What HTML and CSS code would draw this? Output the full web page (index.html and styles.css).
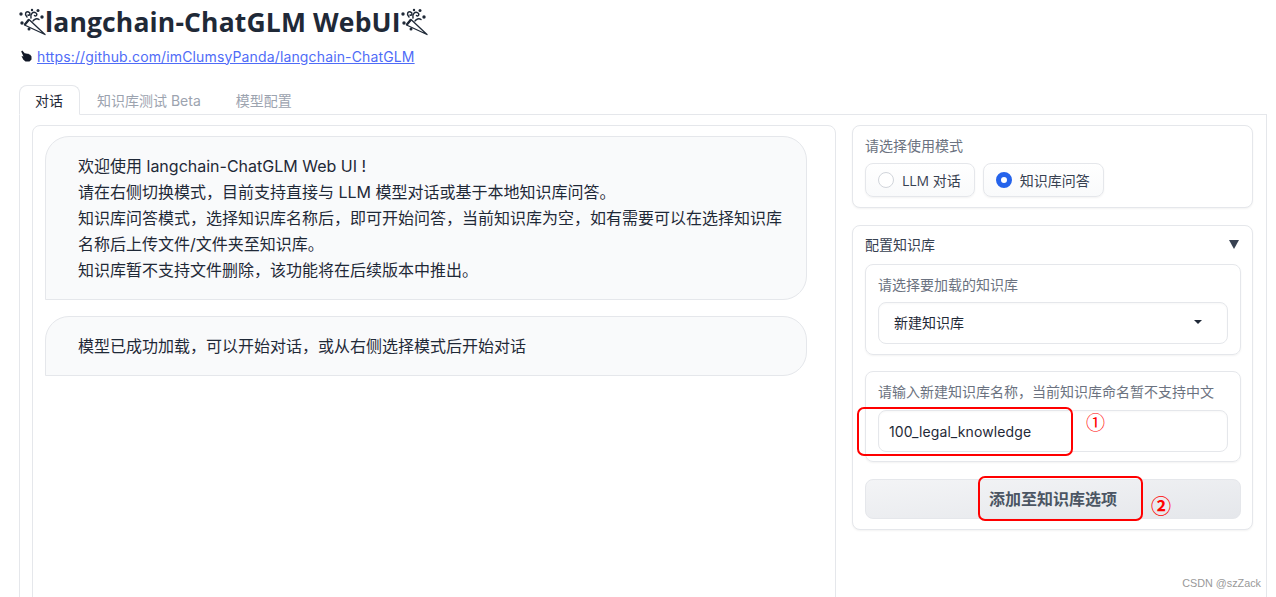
FILE: index.html
```html
<!DOCTYPE html>
<html lang="zh">
<head>
<meta charset="utf-8">
<title>langchain-ChatGLM WebUI</title>
<link rel="stylesheet" href="styles.css">
</head>
<body>
<svg width="0" height="0" class="defs"><defs><g id="popper"><path d="M11 11.5 L27 26.5 L6.5 17 Z" fill="#fff" stroke="#1f2937" stroke-width="1.3" stroke-linejoin="round"/><path d="M11 11.5 L6.5 17" stroke="#1f2937" stroke-width="2.2"/><g fill="none" stroke="#1f2937" stroke-width="1.5" stroke-linecap="round"><path d="M9 9C6 6 8 3 10.500 4S12 8 10 7"/><path d="M13 10c-1-4 2-7 5-5 2 1.500 0 4-1.500 2.500"/><path d="M15 13c1-2 4-3 6-1.500"/></g><g fill="#1f2937"><circle cx="3" cy="6" r="1.700"/><circle cx="4" cy="15" r="1.700"/><circle cx="20" cy="2.500" r="1.500"/><circle cx="24" cy="9" r="1.700"/><circle cx="11" cy="21" r="1.500"/><circle cx="14" cy="2" r="1.200"/></g></g></defs></svg>
<h1 class="title"><svg class="party" viewBox="0 0 28 28"><use href="#popper"/></svg>langchain-ChatGLM WebUI<svg class="party" viewBox="0 0 28 28"><use href="#popper"/></svg></h1>
<p class="repo"><svg class="hand" viewBox="0 0 12 12"><path d="M2.200 .5 L5.200 3.800 L5.800 3 L7 4 L8 3.500 L9.200 4.600 L10 4.400 L11.500 6.500 L11.500 9.500 L9.500 11.500 L5.500 11.500 L3.200 9.500 L1.500 6 L3.500 6.500 L1.200 1.500 Z" fill="#111827"/></svg><a href="#">https://github.com/imClumsyPanda/langchain-ChatGLM</a></p>
<div class="tabs">
  <span class="tab active">对话</span>
  <span class="tab">知识库测试 Beta</span>
  <span class="tab">模型配置</span>
</div>
<main class="panel">
  <section class="chat">
    <div class="bubble">欢迎使用 langchain-ChatGLM Web UI !<br>请在右侧切换模式，目前支持直接与 LLM 模型对话或基于本地知识库问答。<br>知识库问答模式，选择知识库名称后，即可开始问答，当前知识库为空，如有需要可以在选择知识库名称后上传文件/文件夹至知识库。<br>知识库暂不支持文件删除，该功能将在后续版本中推出。</div>
    <div class="bubble">模型已成功加载，可以开始对话，或从右侧选择模式后开始对话</div>
  </section>
  <aside class="side">
    <section class="card mode">
      <div class="label">请选择使用模式</div>
      <div class="radios">
        <label class="radio"><span class="dot"></span>LLM 对话</label>
        <label class="radio"><span class="dot on"></span>知识库问答</label>
      </div>
    </section>
    <section class="card config">
      <div class="acc-head"><span>配置知识库</span><span class="acc-arrow"></span></div>
      <div class="field">
        <div class="label">请选择要加载的知识库</div>
        <div class="select"><span>新建知识库</span><span class="caret"></span></div>
      </div>
      <div class="field">
        <div class="label">请输入新建知识库名称，当前知识库命名暂不支持中文</div>
        <div class="input">100_legal_knowledge<span class="mark box-one"></span><span class="num num-one">①</span></div>
      </div>
      <button class="add" type="button"><span class="add-text">添加至知识库选项</span><span class="mark box-two"></span><span class="num num-two">②</span></button>
    </section>
  </aside>
</main>
<div class="watermark">CSDN @szZack</div>
</body>
</html>
```
FILE: styles.css
```css
* { box-sizing: border-box; }
html, body { height: 597px; overflow: hidden; }
body {
  margin: 0;
  padding: 0 9px 0 19px;
  background: #fff;
  color: #1f2937;
  font-family: "Liberation Sans", "Noto Sans CJK SC", sans-serif;
  position: relative;
}
.defs { position: absolute; }
.title {
  margin: 0;
  height: 44px;
  font-family: "Open Sans", "Noto Sans", sans-serif;
  font-size: 26.5px;
  line-height: 34px;
  font-weight: 700;
  color: #1f2937;
  display: flex;
  align-items: center;
  letter-spacing: 0.15px;
}
.party { width: 28px; height: 28px; flex: none; margin-left: -1px; margin-right: -1px; }
.repo {
  margin: 0;
  height: 41px;
  padding-bottom: 17px;
  display: flex;
  align-items: center;
  font-family: "Inter", sans-serif;
  font-size: 14px;
  letter-spacing: 0.14px;
}
.hand { width: 12px; height: 12px; margin-left: 1px; margin-right: 5px; }
.repo a { color: #4f6cf7; text-decoration: underline; }
.tabs { display: flex; height: 30px; position: relative; z-index: 1; }
.tab {
  padding: 0 17px 0 16px;
  height: 30px;
  line-height: 30px;
  font-size: 14px;
  color: #9ca3af;
  border: 1px solid transparent;
  font-family: "Inter", "Noto Sans CJK SC", sans-serif;
}
.tab.active {
  color: #1f2937;
  width: 61px;
  padding: 0 15px;
  background: #fff;
  border-color: #e5e7eb;
  border-bottom-color: #fff;
  border-radius: 8px 8px 0 0;
}
.panel {
  margin-top: -1px;
  height: 600px;
  border: 1px solid #e5e7eb;
  padding: 10px 13px 0 12px;
  display: flex;
  gap: 16px;
  align-items: flex-start;
}
.chat {
  width: 804px;
  height: 600px;
  flex: none;
  border: 1px solid #e5e7eb;
  border-radius: 8px;
  padding: 10px 28px 0 12px;
  display: flex;
  flex-direction: column;
  gap: 16px;
}
.bubble {
  background: #f9fafb;
  border: 1px solid #e5e7eb;
  border-radius: 24px 24px 24px 0;
  padding: 16px 24px 16px 32px;
  font-family: "Inter", "Noto Sans CJK SC", sans-serif;
  font-size: 16px;
  line-height: 26px;
  color: #1f2937;
}
.side { flex: 1; display: flex; flex-direction: column; gap: 17px; min-width: 0; }
.card {
  border: 1px solid #e5e7eb;
  border-radius: 8px;
  box-shadow: 0 1px 2px rgba(0,0,0,.05);
  background: #fff;
}
.mode { height: 83px; padding: 11px 12px; }
.label {
  font-size: 14px;
  line-height: 18px;
  color: #6b7280;
  font-family: "Inter", "Noto Sans CJK SC", sans-serif;
}
.radios { display: flex; gap: 8px; margin-top: 8px; }
.radio {
  display: flex;
  align-items: center;
  height: 34px;
  padding: 0 13px 0 12px;
  gap: 8px;
  font-size: 14px;
  color: #374151;
  font-family: "Open Sans", "Noto Sans CJK SC", sans-serif;
  border: 1px solid #e5e7eb;
  border-radius: 8px;
  background: linear-gradient(to bottom, #fff, #f9fafb);
  box-shadow: 0 1px 2px rgba(0,0,0,.05);
}
.dot {
  width: 16px; height: 16px;
  border-radius: 50%;
  border: 1px solid #d1d5db;
  background: #fff;
}
.dot.on { border: 5px solid #2563eb; }
.config { height: 305px; padding: 6px 11px 9px 12px; display: flex; flex-direction: column; }
.acc-head {
  display: flex;
  justify-content: space-between;
  align-items: center;
  height: 24px;
  margin-bottom: 8px;
  font-size: 14px;
  color: #374151;
  font-family: "Inter", "Noto Sans CJK SC", sans-serif;
}
.acc-arrow {
  width: 0; height: 0;
  margin-right: 2px;
  border-left: 5px solid transparent;
  border-right: 5px solid transparent;
  border-top: 9px solid #374151;
}
.field {
  border: 1px solid #e5e7eb;
  border-radius: 8px;
  padding: 11px 12px 10px;
  height: 91px;
  margin-bottom: 16px;
  box-shadow: 0 1px 2px rgba(0,0,0,.05);
}
.select, .input {
  margin-top: 8px;
  height: 42px;
  border: 1px solid #e5e7eb;
  border-radius: 8px;
  font-size: 14px;
  color: #1f2937;
  font-family: "Inter", "Noto Sans CJK SC", sans-serif;
  display: flex;
  align-items: center;
  box-shadow: 0 1px 2px rgba(0,0,0,.03) inset;
}
.select { padding: 0 25px 2px 15px; justify-content: space-between; }
.input { padding: 0 10px; margin-top: 9px; letter-spacing: 0.1px; position: relative; }
.caret {
  width: 0; height: 0;
  border-left: 4px solid transparent;
  border-right: 4px solid transparent;
  border-top: 4px solid #1f2937;
}
.add {
  height: 40px;
  margin-top: 1px;
  flex: none;
  width: 100%;
  border: 1px solid #e5e7eb;
  border-radius: 8px;
  background: linear-gradient(to bottom right, #f3f4f6, #e5e7eb);
  position: relative;
  font-family: "Liberation Sans", "Noto Sans CJK SC", sans-serif;
  font-size: 16px;
  font-weight: 700;
  color: #4b5563;
  padding: 0;
  text-align: left;
}
.add-text { position: relative; left: 123px; top: -1px; }
.mark {
  position: absolute;
  border: 2px solid #f00;
  border-radius: 7px;
  background: transparent;
}
.box-one { left: -22px; top: -4px; width: 216px; height: 49px; }
.box-two { left: 112px; top: -4px; width: 165px; height: 45px; }
.num {
  position: absolute;
  color: #f00;
  font-family: "Noto Sans CJK SC", sans-serif;
  font-weight: 400;
  letter-spacing: 0;
}
.num-one { left: 207px; top: 0; font-size: 19px; line-height: 22px; }
.num-two { left: 285px; top: 15px; font-size: 20px; line-height: 22px; font-weight: 700; }
.watermark {
  position: absolute;
  right: 15px;
  bottom: 7px;
  font-size: 10.8px;
  line-height: 13px;
  color: #999;
  font-family: "Liberation Sans", sans-serif;
}
```
